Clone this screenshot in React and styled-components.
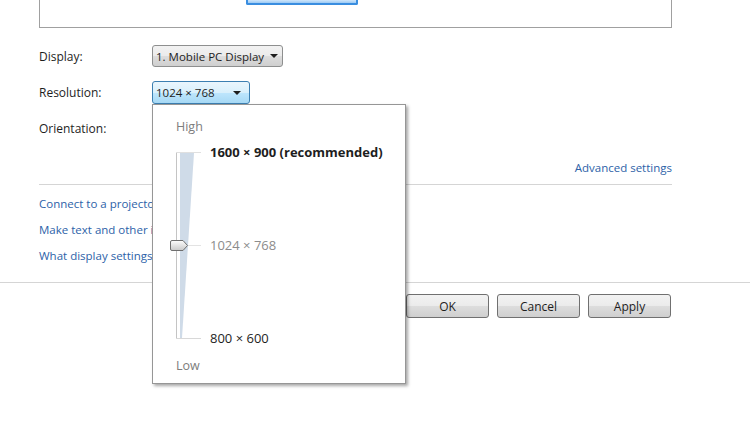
import styled, { createGlobalStyle } from "styled-components";

const GlobalStyle = createGlobalStyle`
  html, body {
    margin: 0;
    padding: 0;
    background: #ffffff;
  }
  body {
    font-family: "Open Sans", "Noto Sans", "DejaVu Sans", sans-serif;
    font-size: 11.5px;
    color: #1e1e1e;
  }
`;

const Page = styled.div`
  width: 750px;
  height: 432px;
  overflow: hidden;
  position: relative;
`;

const Content = styled.div`
  width: 633px;
  padding-left: 39px;
`;

const Preview = styled.div`
  height: 27px;
  border: 1px solid #a0a0a0;
  border-top: none;
  display: flex;
  justify-content: flex-start;
  padding-left: 206px;
`;

const MonitorEdge = styled.div`
  width: 108px;
  height: 3px;
  border: 2px solid #3a8ee0;
  border-top: none;
  background: linear-gradient(#cfe6fb, #9ccaf4);
  border-radius: 0 0 2px 2px;
`;

const Form = styled.div`
  display: grid;
  grid-template-columns: 113px 1fr;
  grid-auto-rows: 23px;
  row-gap: 13px;
  align-items: center;
  margin-top: 17px;
`;

const Label = styled.div`
  font-size: 12px;
  line-height: 16px;
`;

const Field = styled.div`
  position: relative;
  display: flex;
  align-items: ${(p) => (p.top ? "flex-start" : "center")};
  height: 100%;
`;

const Select = styled.div`
  height: ${(p) => (p.active ? 23 : 22)}px;
  width: ${(p) => p.width}px;
  box-sizing: border-box;
  display: flex;
  align-items: center;
  justify-content: space-between;
  padding: 0 8px 0 3px;
  border: 1px solid ${(p) => (p.active ? "#3c7fb1" : "#8e8f8f")};
  border-radius: 3px;
  background: ${(p) =>
    p.active
      ? "linear-gradient(#eaf6fd 0%, #d9f0fc 50%, #bee6fd 51%, #a7d9f5 100%)"
      : "linear-gradient(#f2f2f2 0%, #ebebeb 50%, #dddddd 51%, #cfcfcf 100%)"};
  white-space: nowrap;
  overflow: hidden;
`;

const Caret = styled.span`
  flex: none;
  width: 0;
  height: 0;
  border-left: 4px solid transparent;
  border-right: 4px solid transparent;
  border-top: 4px solid #1e1e1e;
  margin-left: 6px;
`;

const Popup = styled.div`
  position: absolute;
  left: 0;
  top: 23px;
  width: 254px;
  height: 280px;
  box-sizing: border-box;
  background: #ffffff;
  border: 1px solid #969696;
  box-shadow: 2px 2px 3px rgba(0, 0, 0, 0.35);
  padding: 14px 0 0 15px;
  z-index: 5;
`;

const EndLabel = styled.div`
  font-size: 12.5px;
  line-height: 16px;
  color: #7d7d7d;
  padding-left: 8px;
  margin: ${(p) => p.margin};
`;

const SliderArea = styled.div`
  display: flex;
  height: 202px;
`;

const Ticks = styled.div`
  display: flex;
  flex-direction: column;
  justify-content: space-between;
`;

const TickLabel = styled.div`
  font-size: 13px;
  line-height: 16px;
  font-weight: ${(p) => (p.bold ? 700 : 400)};
  color: ${(p) => p.color || "#1e1e1e"};
  white-space: nowrap;
`;

const AdvancedRow = styled.div`
  display: flex;
  justify-content: flex-end;
  margin-top: 20px;
  padding-bottom: 8px;
  border-bottom: 1px solid #d5d5d5;
`;

const Link = styled.a`
  color: #2d62a8;
  line-height: 16px;
  text-decoration: none;
  white-space: nowrap;
`;

const LinkList = styled.div`
  display: flex;
  flex-direction: column;
  gap: 10px;
  margin-top: 11px;
`;

const Footer = styled.div`
  margin-top: 18px;
  border-top: 1px solid #d5d5d5;
  padding: 11px 79px 0 0;
  display: flex;
  justify-content: flex-end;
  gap: 8px;
`;

const Button = styled.button`
  width: 83px;
  height: 24px;
  border: 1px solid #707070;
  border-radius: 3px;
  background: linear-gradient(#f2f2f2 0%, #ebebeb 50%, #dddddd 51%, #cfcfcf 100%);
  font-family: inherit;
  font-size: 12px;
  color: #1e1e1e;
  padding: 0;
`;

const ResolutionSlider = () => (
  <svg width="42" height="202" viewBox="0 0 42 202">
    <defs>
      <linearGradient id="thumb" x1="0" y1="0" x2="0" y2="1">
        <stop offset="0" stopColor="#fdfdfd" />
        <stop offset="1" stopColor="#c9c9c9" />
      </linearGradient>
    </defs>
    <line x1="8.5" y1="8" x2="8.5" y2="194" stroke="#c4c4c4" />
    <line x1="8" y1="8.5" x2="33" y2="8.5" stroke="#e0e0e0" />
    <line x1="8" y1="194.5" x2="33" y2="194.5" stroke="#d8d8d8" />
    <line x1="14" y1="101.5" x2="33" y2="101.5" stroke="#e3e3e3" />
    <polygon points="12,9 26,9 14,194 12,194" fill="#cfdbe8" />
    <path
      d="M4 96.5 h11 l4.5 5 l-4.5 5 h-11 a1.5 1.5 0 0 1 -1.5 -1.5 v-7 a1.5 1.5 0 0 1 1.5 -1.5 z"
      fill="url(#thumb)"
      stroke="#6f6f6f"
    />
  </svg>
);

const App = () => (
  <Page>
    <GlobalStyle />
    <Content>
      <Preview>
        <MonitorEdge />
      </Preview>
      <Form>
        <Label>Display:</Label>
        <Field top>
          <Select width={131}>
            1. Mobile PC Display
            <Caret />
          </Select>
        </Field>
        <Label>Resolution:</Label>
        <Field top>
          <Select width={98} active>
            1024 × 768
            <Caret />
          </Select>
          <Popup>
            <EndLabel margin="0 0 9px 0">High</EndLabel>
            <SliderArea>
              <ResolutionSlider />
              <Ticks>
                <TickLabel bold>1600 × 900 (recommended)</TickLabel>
                <TickLabel color="#8c8c8c">1024 × 768</TickLabel>
                <TickLabel>800 × 600</TickLabel>
              </Ticks>
            </SliderArea>
            <EndLabel margin="12px 0 0 0">Low</EndLabel>
          </Popup>
        </Field>
        <Label>Orientation:</Label>
        <Field />
      </Form>
      <AdvancedRow>
        <Link>Advanced settings</Link>
      </AdvancedRow>
      <LinkList>
        <Link>Connect to a projector (or press the ⊞ key and tap P)</Link>
        <Link>Make text and other items larger or smaller</Link>
        <Link>What display settings should I choose?</Link>
      </LinkList>
    </Content>
    <Footer>
      <Button>OK</Button>
      <Button>Cancel</Button>
      <Button>Apply</Button>
    </Footer>
  </Page>
);

export default App;
